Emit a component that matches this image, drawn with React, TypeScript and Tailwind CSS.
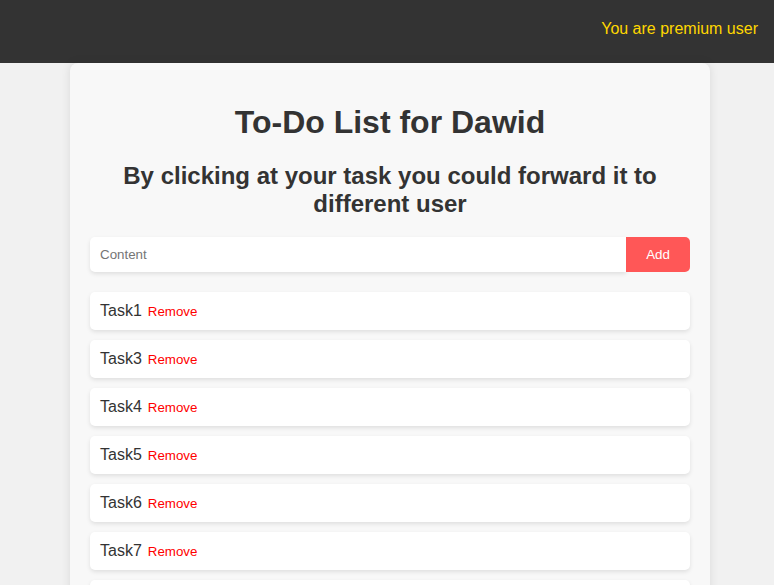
import React from "react";

const tasks = ["Task1", "Task3", "Task4", "Task5", "Task6", "Task7", "Task8", "Task9"];

export default function App() {
  return (
    <div className="min-h-screen bg-[#f1f1f1] text-[#333]" style={{ fontFamily: '"Liberation Sans", Arial, sans-serif' }}>
      <header className="h-[63px] bg-[#333333] flex justify-end items-start pt-[20px] pr-[16px]">
        <span className="text-[16px] text-[#ffd700] leading-[18px]">You are premium user</span>
      </header>
      <main className="ml-[70px] w-[640px] bg-[#f8f8f8] rounded-t-[8px] shadow-[0_0_10px_rgba(0,0,0,0.1)] px-[20px] pt-[41px] pb-[20px]">
        <h1 className="text-[32px] font-bold text-center leading-[37px] text-[#333]">To-Do List for Dawid</h1>
        <h2 className="text-[24px] font-bold text-center leading-[27.6px] mt-[21px] text-[#333]">
          By clicking at your task you could forward it to different user
        </h2>
        <div className="flex mt-[20px] h-[35px]">
          <input
            placeholder="Content"
            className="flex-1 bg-white rounded-l-[5px] px-[10px] text-[13.33px] placeholder:text-[#757575] outline-none shadow-[0_2px_4px_rgba(0,0,0,0.1)]"
          />
          <button className="w-[64px] bg-[#ff5757] text-white text-[13.33px] rounded-r-[5px]">Add</button>
        </div>
        <ul className="mt-[20px] flex flex-col gap-[10px]">
          {tasks.map((t) => (
            <li
              key={t}
              className="bg-white rounded-[5px] h-[38px] px-[10px] flex items-center shadow-[0_2px_4px_rgba(0,0,0,0.1)]"
            >
              <span className="text-[16px] text-[#333]">{t}</span>
              <span className="ml-[6px] text-[13.33px] text-[#ff0000] mt-[2px]">Remove</span>
            </li>
          ))}
        </ul>
      </main>
    </div>
  );
}
